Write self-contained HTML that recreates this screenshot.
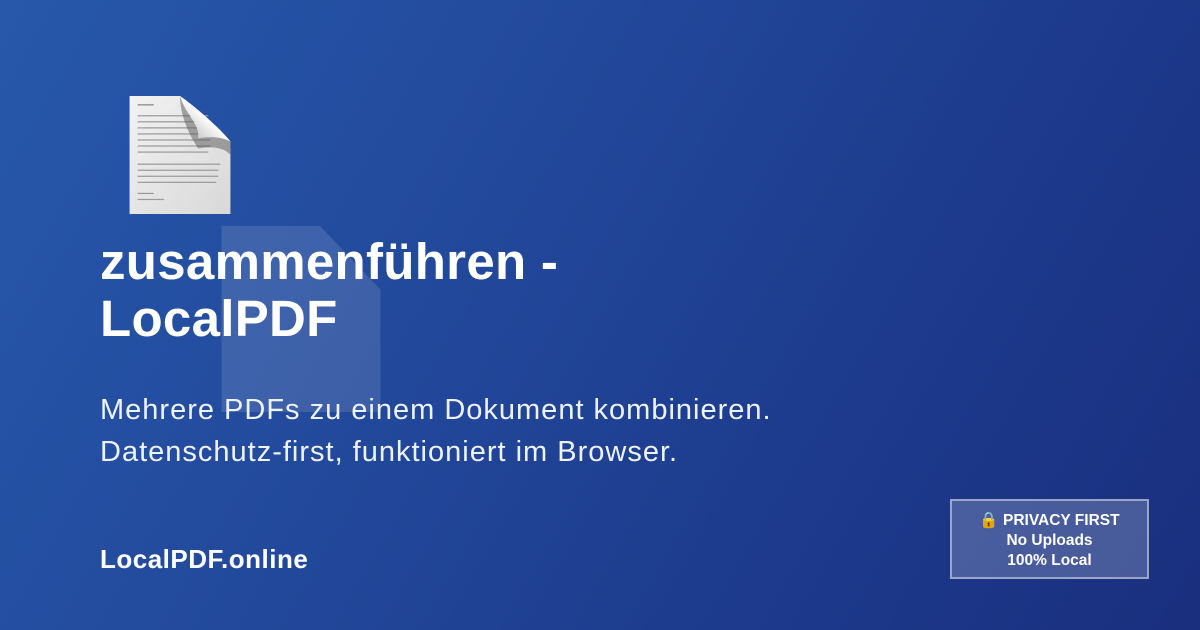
<!DOCTYPE html>
<html><head><meta charset="utf-8"><style>
html,body{margin:0;padding:0}
body{width:1200px;height:630px;overflow:hidden;position:relative;font-family:"Liberation Sans",sans-serif;
background:linear-gradient(120deg,#2758aa 0%,#22489b 40%,#1d3a8c 70%,#1a2f7e 100%);}
.t{position:absolute;left:100px;top:233px;color:#fff;font-weight:bold;font-size:51px;line-height:57px;letter-spacing:0.3px}
.s{position:absolute;left:100px;top:389px;color:#eef2fb;font-size:29px;line-height:42px;letter-spacing:1px}
.f{position:absolute;left:100px;top:544px;color:#fff;font-weight:bold;font-size:26px;letter-spacing:0.5px}
.b{position:absolute;left:950px;top:499px;width:199px;height:80px;box-sizing:border-box;border:2px solid rgba(255,255,255,0.45);background:rgba(255,255,255,0.2);color:#fff;font-weight:bold;font-size:15.5px;line-height:20px;text-align:center;padding-top:10px}
</style></head><body>
<svg style="position:absolute;left:216px;top:226px;opacity:0.12" width="170" height="186" viewBox="0 0 100 117">
<path d="M0 0H62L100 40V117H0Z" fill="#fff"/>
</svg>
<svg style="position:absolute;left:129px;top:96px" width="102" height="118" viewBox="0 0 100 117">
<defs><linearGradient id="g" x1="0" y1="0" x2="1" y2="1"><stop offset="0" stop-color="#f2f2f2"/><stop offset="1" stop-color="#d8d8d8"/></linearGradient>
<linearGradient id="c" x1="0" y1="1" x2="1" y2="0"><stop offset="0" stop-color="#aaa"/><stop offset="0.5" stop-color="#fafafa"/><stop offset="1" stop-color="#ccc"/></linearGradient></defs>
<path d="M0 0H50L100 45V117H0Z" fill="url(#g)"/>
<g fill="#999"><rect x="8" y="8" width="16" height="1.5"/>
<rect x="8" y="19" width="70" height="1.2"/><rect x="8" y="25" width="72" height="1.2"/><rect x="8" y="31" width="72" height="1.2"/><rect x="8" y="37" width="72" height="1.2"/><rect x="8" y="43" width="72" height="1.2"/><rect x="8" y="49" width="72" height="1.2"/><rect x="8" y="55" width="70" height="1.2"/>
<rect x="8" y="67" width="82" height="1.2"/><rect x="8" y="73" width="80" height="1.2"/><rect x="8" y="79" width="80" height="1.2"/><rect x="8" y="85" width="78" height="1.2"/>
<rect x="8" y="96" width="16" height="1.2"/><rect x="8" y="102" width="26" height="1.2"/></g>
<path d="M50 0C56 20 70 28 68 40C80 38 94 40 100 45L100 58C92 50 80 50 68 52C60 40 50 20 50 0Z" fill="#555" opacity="0.5"/>
<path d="M50 0C62 8 88 30 100 45C90 40 78 40 68 42C70 28 56 18 50 0Z" fill="url(#c)"/>
</svg>
<div class="t">zusammenführen -<br>LocalPDF</div>
<div class="s">Mehrere PDFs zu einem Dokument kombinieren.<br>Datenschutz-first, funktioniert im Browser.</div>
<div class="f">LocalPDF.online</div>
<div class="b">🔒 PRIVACY FIRST<br>No Uploads<br>100% Local</div>
</body></html>
